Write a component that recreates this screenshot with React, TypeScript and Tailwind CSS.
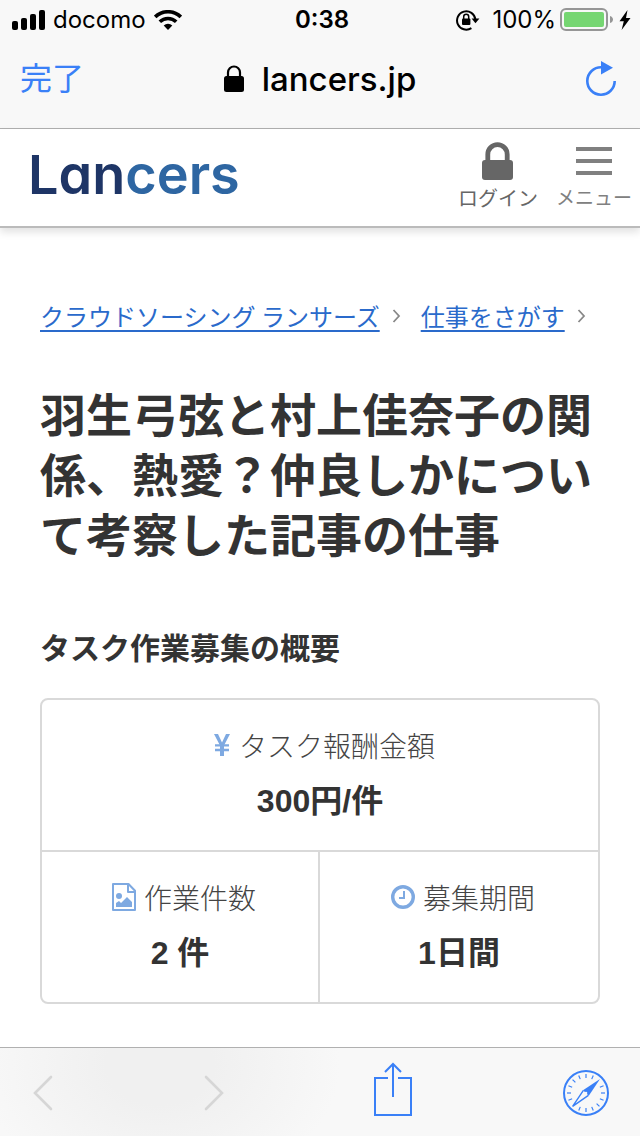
import type { ReactNode } from 'react'

interface SummaryItemProps {
  icon: ReactNode
  label: string
  value: string
  className?: string
}

function StatusBar() {
  return (
    <div className="grid h-10 grid-cols-[1fr_auto_1fr] items-center pr-2 pl-3 text-2xl leading-10 text-black">
      <div className="flex items-center gap-2">
        <svg width="33" height="20" viewBox="0 0 33 20" aria-hidden="true">
          <rect x="0" y="11" width="6" height="9" rx="2" />
          <rect x="9" y="8" width="6" height="12" rx="2" />
          <rect x="18" y="4" width="6" height="16" rx="2" />
          <rect x="27" y="0" width="6" height="20" rx="2" />
        </svg>
        <span>docomo</span>
        <svg width="28" height="20" viewBox="0 0 28 20" aria-hidden="true">
          <g fill="none" stroke="#000" strokeWidth="3.6">
            <path d="M1.2 6.9a18.4 18.4 0 0 1 25.6 0" />
            <path d="M5.8 11.8a11.8 11.8 0 0 1 16.4 0" />
          </g>
          <path d="M14 20l-4.3-4.6a6.2 6.2 0 0 1 8.6 0z" />
        </svg>
      </div>
      <span className="font-semibold">0:38</span>
      <div className="flex items-center justify-end">
        <svg width="24" height="22" viewBox="0 0 24 22" aria-hidden="true">
          <path d="M15.4 19.1a9.2 9.2 0 1 1 4-8.6" fill="none" stroke="#000" strokeWidth="2" />
          <path d="M15.6 9.6h7.8l-3.9 4.6z" />
          <rect x="6" y="9.6" width="8.4" height="6.4" rx="1" />
          <path d="M7.7 10V7.7a2.5 2.5 0 0 1 5 0V10" fill="none" stroke="#000" strokeWidth="1.5" />
        </svg>
        <span className="ml-3">100%</span>
        <svg className="ml-1" width="54" height="24" viewBox="0 0 54 24" aria-hidden="true">
          <rect x="1" y="1" width="46" height="21" rx="5" fill="none" stroke="#969696" strokeWidth="2" />
          <rect x="4" y="4" width="40" height="15" rx="2" fill="#76d672" />
          <path d="M50 8c4 1 4 6 0 7z" fill="#969696" />
        </svg>
        <svg className="ml-1" width="14" height="20" viewBox="0 0 14 20" aria-hidden="true">
          <path d="M9.5 0L1.5 11.3h4.3L3.6 20 12.5 8H8z" />
        </svg>
      </div>
    </div>
  )
}

function BrowserBar() {
  return (
    <div className="grid h-[88px] grid-cols-[1fr_auto_1fr] items-center px-5 pb-2.5">
      <button type="button" className="justify-self-start text-[32px] leading-10 text-[#3a80f7]">
        完了
      </button>
      <div className="flex items-center gap-[18px] text-[33px] leading-10 font-medium text-black">
        <svg width="20" height="28" viewBox="0 0 20 28" aria-hidden="true">
          <rect x="0" y="11" width="20" height="16" rx="2.5" />
          <path d="M4 12V7.5a6 6 0 0 1 12 0V12" fill="none" stroke="#000" strokeWidth="2.2" />
        </svg>
        <span>lancers.jp</span>
      </div>
      <button type="button" aria-label="再読み込み" className="mr-1 justify-self-end">
        <svg width="30" height="36" viewBox="0 0 30 36" aria-hidden="true">
          <path d="M15.5 6.3A13.7 13.7 0 1 0 28.7 20" fill="none" stroke="#3a80f7" strokeWidth="2.6" />
          <path d="M15 0l12 6.7-12 6.8z" fill="#3a80f7" />
        </svg>
      </button>
    </div>
  )
}

function SiteHeader() {
  return (
    <header className="flex h-[99px] items-start justify-between border-b-2 border-[#bbb] bg-white pr-2 pl-7 shadow-[0_4px_8px_rgba(0,0,0,0.12)]">
      <a
        href="#"
        className="pt-4 font-[Inter,sans-serif] text-[54px] leading-[60px] font-semibold text-[#1e3566] [font-feature-settings:'cv11']"
      >
        Lan<span className="text-[#2e66a2]">cers</span>
      </a>
      <nav className="flex gap-[18px] pt-3">
        <a href="#" className="flex flex-col items-center text-[20px] leading-7 text-[#666]">
          <svg width="31" height="40" viewBox="0 0 31 40" aria-hidden="true">
            <rect x="0" y="19" width="31" height="20" rx="3" fill="#666" />
            <path d="M5.8 20v-6.6a9.7 9.7 0 0 1 19.4 0V20" fill="none" stroke="#666" strokeWidth="4.8" />
          </svg>
          <span className="mt-1">ログイン</span>
        </a>
        <button type="button" className="flex flex-col items-center text-[19px] leading-7 text-[#808080]">
          <svg width="36" height="40" viewBox="0 0 36 40" aria-hidden="true">
            <path d="M0 8h36M0 20h36M0 32h36" stroke="#808080" strokeWidth="4" />
          </svg>
          <span className="mt-1">メニュー</span>
        </button>
      </nav>
    </header>
  )
}

function CrumbArrow() {
  return (
    <svg width="9" height="14" viewBox="0 0 9 14" aria-hidden="true">
      <path d="M1.5 1L7 7l-5.5 6" fill="none" stroke="#888" strokeWidth="1.8" />
    </svg>
  )
}

function SummaryItem({ icon, label, value, className = '' }: SummaryItemProps) {
  return (
    <div className={`pt-6 pb-[25px] text-center ${className}`}>
      <dt className="flex items-center justify-center gap-2 pl-2 text-[28px] leading-[42px] font-light text-[#444]">
        {icon}
        {label}
      </dt>
      <dd className="mt-[11px] font-['Liberation_Sans','Noto_Sans_CJK_JP',sans-serif] text-[32px] leading-[48px] font-bold">
        {value}
      </dd>
    </div>
  )
}

function YenIcon() {
  return (
    <svg width="18" height="24" viewBox="0 0 18 24" aria-hidden="true">
      <path d="M1 1h4l4 8.4L13 1h4l-6 11.4V23H7V12.4z" fill="#7ea9e1" />
      <path d="M2 12.4h14M2 17h14" fill="none" stroke="#7ea9e1" strokeWidth="2.4" />
    </svg>
  )
}

function ImageFileIcon() {
  return (
    <svg width="24" height="28" viewBox="0 0 24 28" aria-hidden="true">
      <path
        d="M1 1h15.5L23 7.8V27H1zM16 1v8h7"
        fill="none"
        stroke="#7ea9e1"
        strokeWidth="2"
        strokeLinejoin="round"
      />
      <circle cx="7" cy="13" r="3" fill="#7ea9e1" />
      <path d="M4 24v-4l3-2 2 2 6-6 5 5v5z" fill="#7ea9e1" />
    </svg>
  )
}

function ClockIcon() {
  return (
    <svg width="24" height="24" viewBox="0 0 24 24" aria-hidden="true">
      <circle cx="12" cy="12" r="10.3" fill="none" stroke="#7ea9e1" strokeWidth="3.4" />
      <path d="M13 6v7H8" fill="none" stroke="#7ea9e1" strokeWidth="2" />
    </svg>
  )
}

function CompassIcon() {
  const ticks = Array.from({ length: 16 }, (_, i) => i * 22.5).filter((a) => a !== 45 && a !== 225)

  return (
    <svg width="46" height="46" viewBox="0 0 46 46" aria-hidden="true">
      <circle cx="23" cy="23" r="22" fill="none" stroke="#3a80f7" strokeWidth="2" />
      {ticks.map((angle) => (
        <path key={angle} d="M23 4v4" stroke="#3a80f7" strokeWidth="1.2" transform={`rotate(${angle} 23 23)`} />
      ))}
      <path d="M37 9L20 20.2l5.8 5.6z" fill="#3a80f7" />
      <path d="M20.4 20.4L9.6 36.4l15.8-11" fill="none" stroke="#3a80f7" strokeWidth="1.4" />
      <circle cx="23" cy="23" r="1.3" fill="#f8f8f8" />
    </svg>
  )
}

function BottomBar() {
  return (
    <footer className="flex h-[89px] items-center justify-between border-t border-[#b0b0b0] bg-[#f8f8f8] bg-[radial-gradient(180px_130px_at_25%_20%,#f0f0f0_30%,#f8f8f8_100%)] pt-0.5 pr-[31px] pl-[33px]">
      <button type="button" aria-label="戻る" disabled>
        <svg width="20" height="36" viewBox="0 0 20 36" aria-hidden="true">
          <path d="M18 2L2 18l16 16" fill="none" stroke="#d6d6d6" strokeWidth="2.6" strokeLinecap="round" />
        </svg>
      </button>
      <button type="button" aria-label="進む" disabled>
        <svg width="20" height="36" viewBox="0 0 20 36" aria-hidden="true">
          <path d="M2 2l16 16L2 34" fill="none" stroke="#d6d6d6" strokeWidth="2.6" strokeLinecap="round" />
        </svg>
      </button>
      <button type="button" aria-label="共有" className="pb-2">
        <svg width="38" height="54" viewBox="0 0 38 54" aria-hidden="true">
          <g fill="none" stroke="#3a80f7" strokeWidth="2">
            <path d="M14 16H1v37h36V16H24" />
            <path d="M19 35V2M11 10l8-8 8 8" />
          </g>
        </svg>
      </button>
      <button type="button" aria-label="Safari">
        <CompassIcon />
      </button>
    </footer>
  )
}

function App() {
  return (
    <div
      lang="ja"
      className="flex min-h-screen flex-col bg-white font-['Inter','Noto_Sans_CJK_JP',sans-serif] text-[#333]"
    >
      <div className="border-b border-[#b0b0b0] bg-[#f8f8f8]">
        <StatusBar />
        <BrowserBar />
      </div>

      <SiteHeader />

      <main className="flex-1 px-10 pt-[68px] pb-10 font-['Noto_Sans_CJK_JP',sans-serif]">
        <nav aria-label="パンくずリスト" className="flex items-center text-2xl leading-10 text-[#2a6acb]">
          <a href="#" className="mr-3 underline underline-offset-4">
            クラウドソーシング ランサーズ
          </a>
          <CrumbArrow />
          <a href="#" className="mr-3 ml-5 underline underline-offset-4">
            仕事をさがす
          </a>
          <CrumbArrow />
        </nav>

        <h1 className="mt-[46px] text-[46px] leading-[60px] font-bold">
          羽生弓弦と村上佳奈子の関係、熱愛？仲良しかについて考察した記事の仕事
        </h1>

        <h2 className="mt-16 text-[30px] leading-10 font-bold">タスク作業募集の概要</h2>

        <dl className="mt-8 grid grid-cols-2 rounded-lg border-2 border-[#d9d9d9]">
          <SummaryItem
            icon={<YenIcon />}
            label="タスク報酬金額"
            value="300円/件"
            className="col-span-2 border-b-2 border-[#d9d9d9]"
          />
          <SummaryItem
            icon={<ImageFileIcon />}
            label="作業件数"
            value="2 件"
            className="border-r-2 border-[#d9d9d9]"
          />
          <SummaryItem icon={<ClockIcon />} label="募集期間" value="1日間" />
        </dl>
      </main>

      <BottomBar />
    </div>
  )
}

export default App
